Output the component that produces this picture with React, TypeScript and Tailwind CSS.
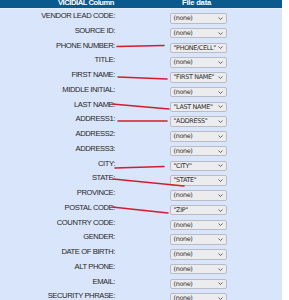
const FIELDS: { label: string; value: string }[] = [
  { label: "VENDOR LEAD CODE", value: "(none)" },
  { label: "SOURCE ID", value: "(none)" },
  { label: "PHONE NUMBER", value: '"PHONE/CELL"' },
  { label: "TITLE", value: "(none)" },
  { label: "FIRST NAME", value: '"FIRST NAME"' },
  { label: "MIDDLE INITIAL", value: "(none)" },
  { label: "LAST NAME", value: '"LAST NAME"' },
  { label: "ADDRESS1", value: '"ADDRESS"' },
  { label: "ADDRESS2", value: "(none)" },
  { label: "ADDRESS3", value: "(none)" },
  { label: "CITY", value: '"CITY"' },
  { label: "STATE", value: '"STATE"' },
  { label: "PROVINCE", value: "(none)" },
  { label: "POSTAL CODE", value: '"ZIP"' },
  { label: "COUNTRY CODE", value: "(none)" },
  { label: "GENDER", value: "(none)" },
  { label: "DATE OF BIRTH", value: "(none)" },
  { label: "ALT PHONE", value: "(none)" },
  { label: "EMAIL", value: "(none)" },
  { label: "SECURITY PHRASE", value: "(none)" },
];

// hand-drawn annotation strokes, label -> dropdown
const MARKS = [
  [117, 46.5, 164, 45.5],
  [118, 77, 167, 79],
  [112, 104, 169, 109],
  [118, 121, 167, 121],
  [115, 168, 164, 166.5],
  [113, 179, 184, 186],
  [112, 207, 168, 213],
];

function FakeSelect({ value }: { value: string }) {
  return (
    <div className="mt-[4px] flex h-[10.5px] w-[57px] items-center justify-between rounded-[2px] border border-[#b9bcc4] bg-[#ececef] pl-[2.5px] pr-[3px]">
      <span className="font-['DejaVu_Sans',sans-serif] text-[6.4px] leading-none tracking-[-0.32px] text-[#2b2b2b] whitespace-nowrap">
        {value}
      </span>
      <svg width="5" height="3" viewBox="0 0 5 3" className="shrink-0">
        <path d="M0.5 0.5 L2.5 2.5 L4.5 0.5" fill="none" stroke="#555" strokeWidth="0.9" />
      </svg>
    </div>
  );
}

export default function App() {
  return (
    <div className="relative h-[300px] w-[289px] overflow-hidden bg-white font-['Liberation_Sans',Arial,sans-serif]">
      <div className="w-[282px] bg-[#d9e5fb]">
        <div className="flex h-[8px] overflow-hidden bg-[#0b5a8e] text-[7.6px] font-bold leading-[8px] tracking-[-0.45px] text-white">
          <span className="-mt-[1px] ml-[58px] whitespace-nowrap">VICIDIAL Column</span>
          <span className="-mt-[1px] ml-[68px] whitespace-nowrap tracking-[-0.2px]">File data</span>
        </div>
        <div className="h-px bg-[#e6eefc]" />
        {FIELDS.map((f) => (
          <div key={f.label} className="flex h-[14.75px] items-start">
            <div className="w-[116px] pr-px text-right text-[7.6px] leading-[14.75px] tracking-[-0.4px] text-[#262626] whitespace-nowrap">
              {f.label}:
            </div>
            <div className="ml-[54px]">
              <FakeSelect value={f.value} />
            </div>
          </div>
        ))}
      </div>
      <svg className="pointer-events-none absolute left-0 top-0" width="289" height="300">
        {MARKS.map(([x1, y1, x2, y2], i) => (
          <line key={i} x1={x1} y1={y1} x2={x2} y2={y2} stroke="#d01f2c" strokeWidth="1.6" strokeLinecap="round" />
        ))}
      </svg>
    </div>
  );
}
